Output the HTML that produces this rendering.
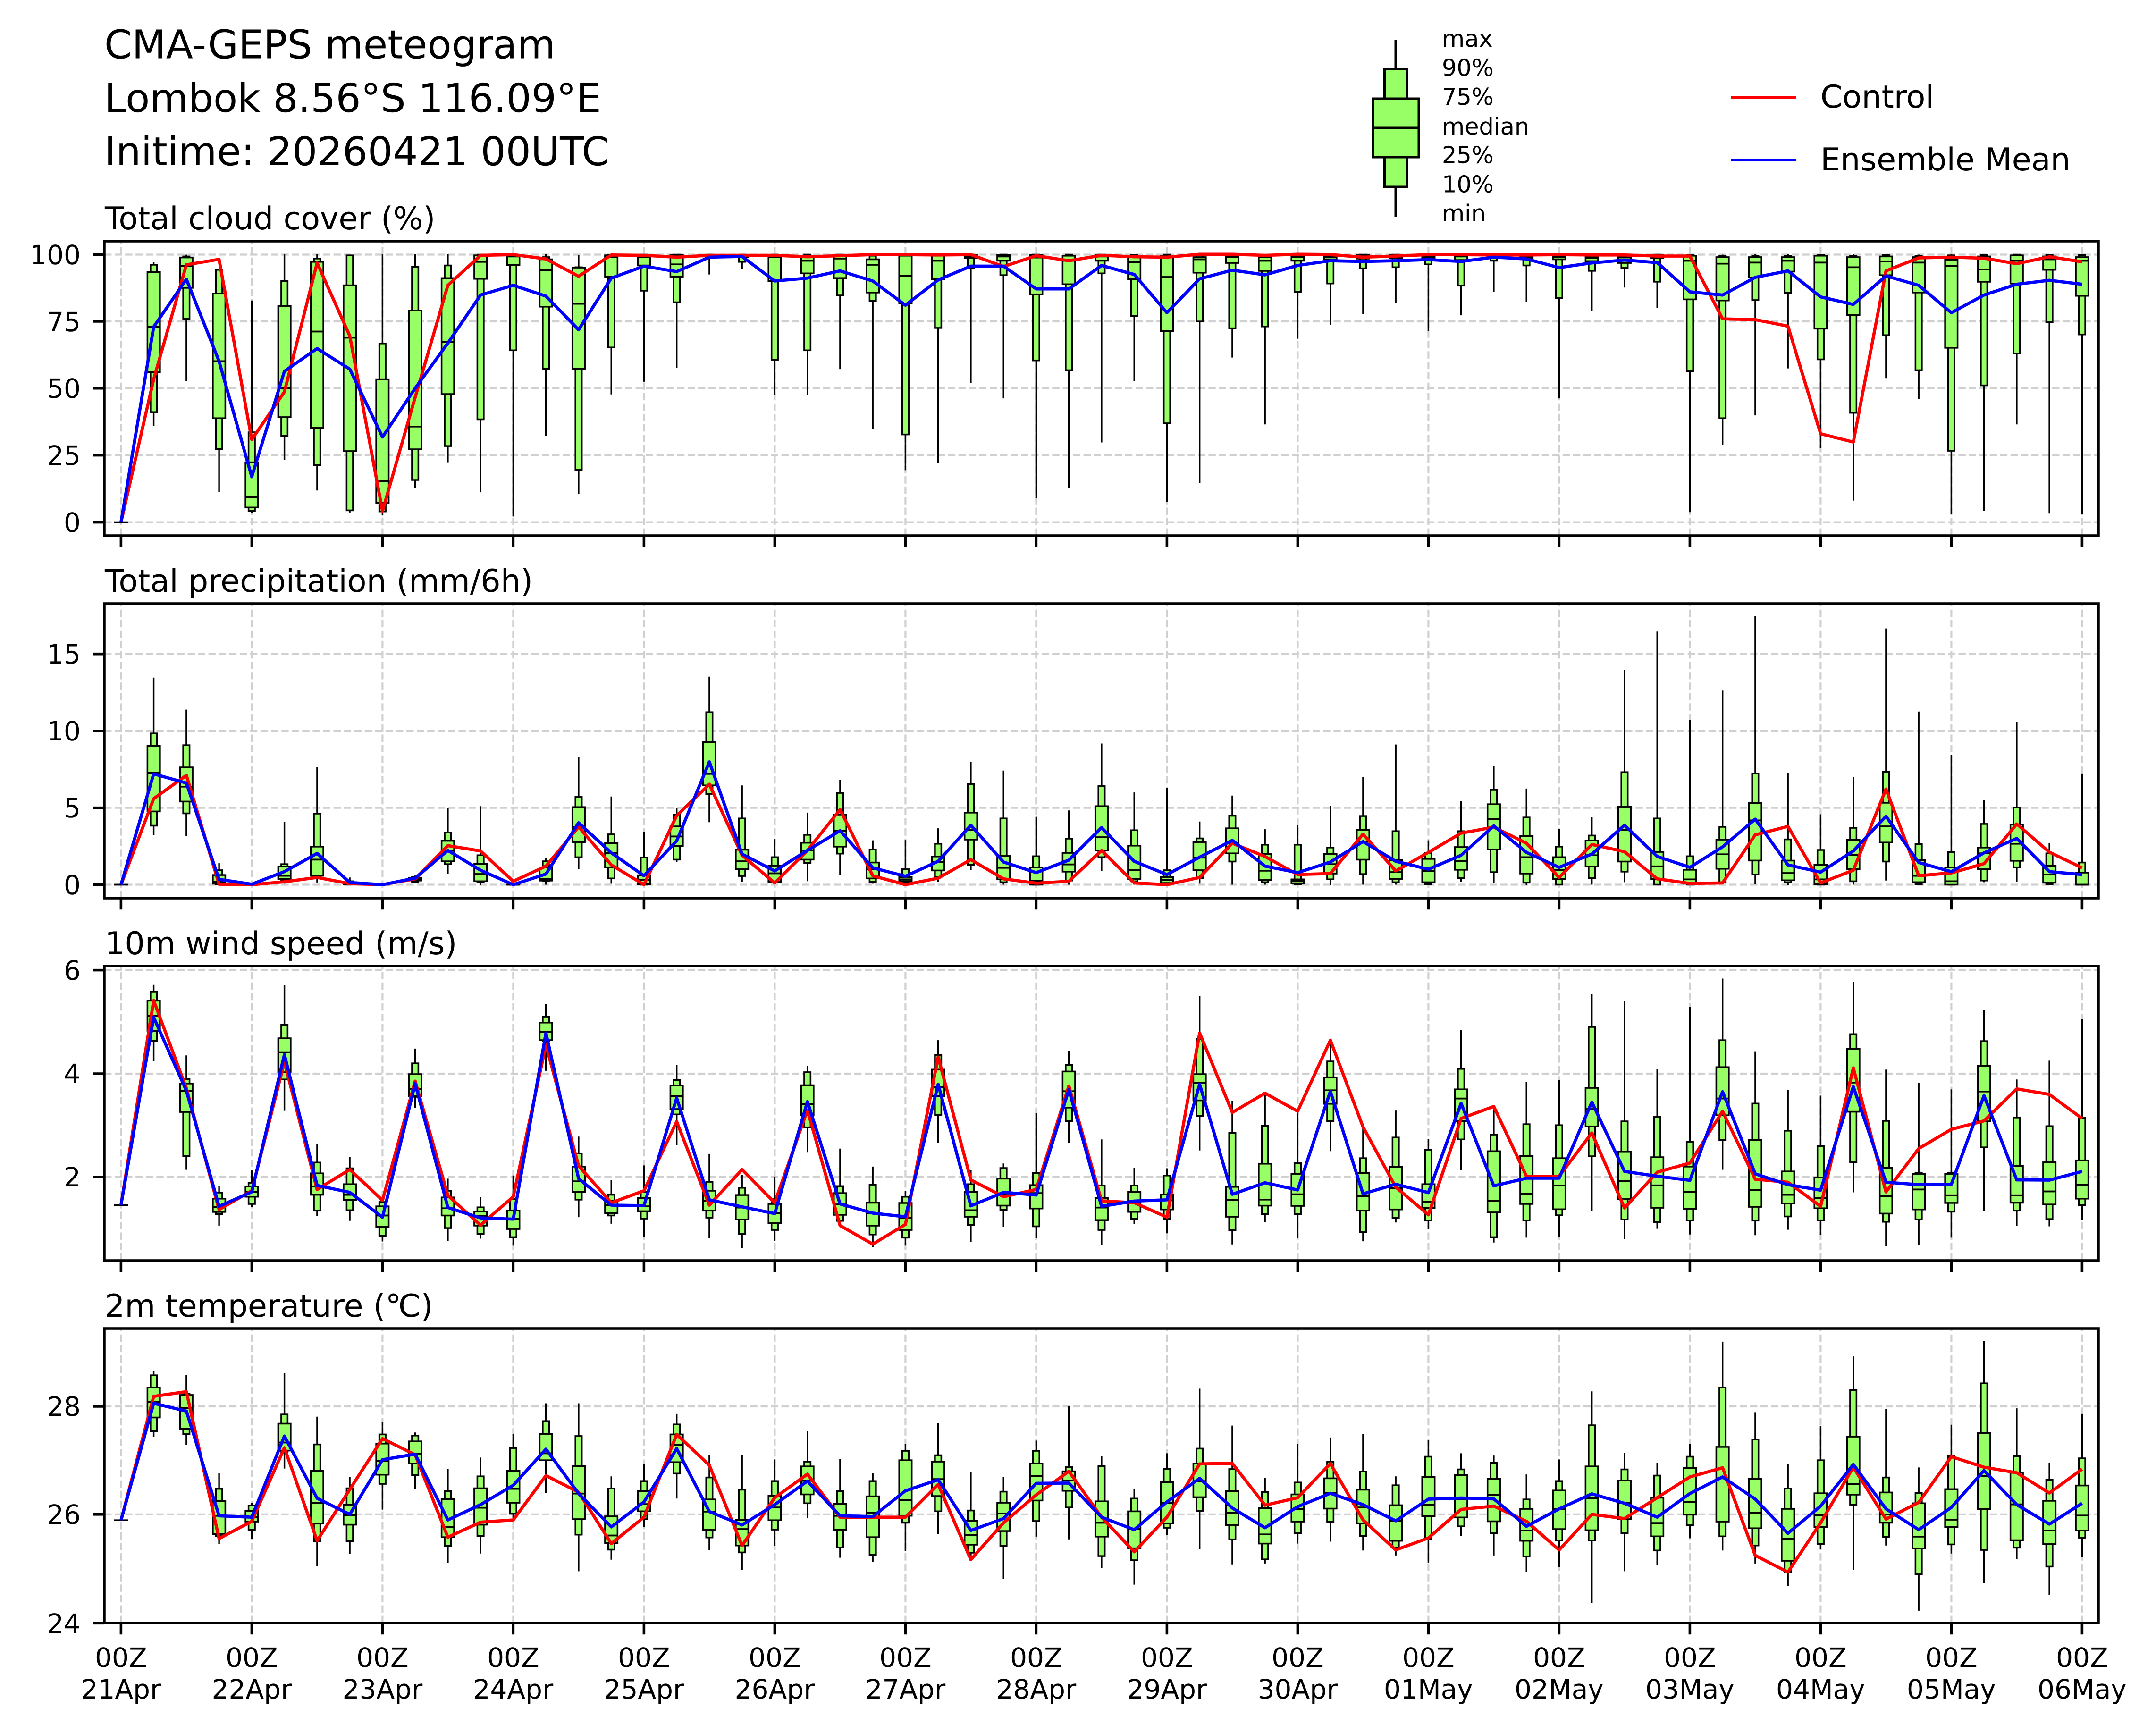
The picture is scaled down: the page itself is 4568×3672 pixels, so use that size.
<!DOCTYPE html>
<html lang="en">
<head>
<meta charset="utf-8">
<title>CMA-GEPS meteogram</title>
<style>
html,body{margin:0;padding:0;background:#fff}
svg{display:block}
text{font-family:"DejaVu Sans",sans-serif;fill:#000;text-rendering:geometricPrecision}
.m{font-size:83.7px}.t{font-size:66.67px}.k{font-size:56.5px}.l{font-size:49.4px}
.e{text-anchor:end}.c{text-anchor:middle}
</style>
</head>
<body>
<svg xmlns="http://www.w3.org/2000/svg" width="4568" height="3672" viewBox="0 0 4568 3672">
<rect width="4568" height="3672" fill="#fff"/>
<defs>
<clipPath id="c0"><rect x="221" y="511" width="4225" height="624"/></clipPath>
<clipPath id="c1"><rect x="221" y="1279" width="4225" height="624"/></clipPath>
<clipPath id="c2"><rect x="221" y="2047" width="4225" height="624"/></clipPath>
<clipPath id="c3"><rect x="221" y="2815" width="4225" height="624"/></clipPath>
</defs>
<g id="plots"></g>

<text class="m" x="221" y="123.5">CMA-GEPS meteogram</text>
<text class="m" x="221" y="237">Lombok 8.56°S 116.09°E</text>
<text class="m" x="221" y="350">Initime: 20260421 00UTC</text>

<text class="t" x="222" y="486">Total cloud cover (%)</text>
<text class="t" x="222" y="1254">Total precipitation (mm/6h)</text>
<text class="t" x="222" y="2022">10m wind speed (m/s)</text>
<text class="t" x="222" y="2790">2m temperature (℃)</text>

<g stroke="#000" stroke-width="5" fill="#99ff66">
<path d="M2957 84V146.5M2957 396V459" fill="none"/>
<rect x="2933.5" y="146.5" width="47.5" height="62.5"/>
<rect x="2933.5" y="333" width="47.5" height="63"/>
<rect x="2909" y="209" width="97" height="124"/>
<path d="M2909 271H3006" fill="none"/>
</g>
<text class="l" x="3055" y="99">max</text>
<text class="l" x="3055" y="160.5">90%</text>
<text class="l" x="3055" y="222">75%</text>
<text class="l" x="3055" y="285">median</text>
<text class="l" x="3055" y="345.5">25%</text>
<text class="l" x="3055" y="407.5">10%</text>
<text class="l" x="3055" y="469">min</text>

<path d="M3668 206H3806" stroke="#f00" stroke-width="6" fill="none"/>
<path d="M3668 339H3806" stroke="#00f" stroke-width="6" fill="none"/>
<text class="t" x="3857" y="228">Control</text>
<text class="t" x="3857" y="361">Ensemble Mean</text>

<text class="k e" x="171" y="560">100</text>
<text class="k e" x="171" y="702">75</text>
<text class="k e" x="171" y="843">50</text>
<text class="k e" x="171" y="985">25</text>
<text class="k e" x="171" y="1127">0</text>

<text class="k e" x="171" y="1406">15</text>
<text class="k e" x="171" y="1569">10</text>
<text class="k e" x="171" y="1732">5</text>
<text class="k e" x="171" y="1895">0</text>

<text class="k e" x="171" y="2076">6</text>
<text class="k e" x="171" y="2295">4</text>
<text class="k e" x="171" y="2514">2</text>

<text class="k e" x="171" y="3000">28</text>
<text class="k e" x="171" y="3229">26</text>
<text class="k e" x="171" y="3460">24</text>

<g class="k">
<text class="k c" x="256.4" y="3532">00Z</text><text class="k c" x="256.4" y="3599">21Apr</text>
<text class="k c" x="533.4" y="3532">00Z</text><text class="k c" x="533.4" y="3599">22Apr</text>
<text class="k c" x="810.4" y="3532">00Z</text><text class="k c" x="810.4" y="3599">23Apr</text>
<text class="k c" x="1087.4" y="3532">00Z</text><text class="k c" x="1087.4" y="3599">24Apr</text>
<text class="k c" x="1364.4" y="3532">00Z</text><text class="k c" x="1364.4" y="3599">25Apr</text>
<text class="k c" x="1641.4" y="3532">00Z</text><text class="k c" x="1641.4" y="3599">26Apr</text>
<text class="k c" x="1918.4" y="3532">00Z</text><text class="k c" x="1918.4" y="3599">27Apr</text>
<text class="k c" x="2195.4" y="3532">00Z</text><text class="k c" x="2195.4" y="3599">28Apr</text>
<text class="k c" x="2472.4" y="3532">00Z</text><text class="k c" x="2472.4" y="3599">29Apr</text>
<text class="k c" x="2749.4" y="3532">00Z</text><text class="k c" x="2749.4" y="3599">30Apr</text>
<text class="k c" x="3026.4" y="3532">00Z</text><text class="k c" x="3026.4" y="3599">01May</text>
<text class="k c" x="3303.4" y="3532">00Z</text><text class="k c" x="3303.4" y="3599">02May</text>
<text class="k c" x="3580.4" y="3532">00Z</text><text class="k c" x="3580.4" y="3599">03May</text>
<text class="k c" x="3857.4" y="3532">00Z</text><text class="k c" x="3857.4" y="3599">04May</text>
<text class="k c" x="4134.4" y="3532">00Z</text><text class="k c" x="4134.4" y="3599">05May</text>
<text class="k c" x="4411.4" y="3532">00Z</text><text class="k c" x="4411.4" y="3599">06May</text>
</g>
</svg>
<script>
(function(){
var P=[
{top:511,y0:0,k:1.3067,ticks:[539.5,681,822.7,964.6,1106.6],
B:"726 733 753 905 1030 1141 1180;705 710 713 736 797 883 1055;745 747 813 1000 1158 1243 1362;832 1197 1280 1377 1405 1415 1420;703 778 847 1075 1155 1207 1273;703 716 725 918 1185 1288 1358;705 707 790 935 1249 1413 1419;703 951 1050 1332 1392 1416 1427;703 739 860 1181 1244 1329 1352;703 735 770 947 1091 1235 1280;705 705 707 725 772 1161 1363;704 705 706 710 734 970 1430;704 712 718 748 849 1021 1207;706 740 741 841 1021 1301 1368;705 706 707 712 766 962 1092;704 705 706 712 735 805 1057;704 705 706 732 766 837 1018;704 705 706 708 710 714 760;704 705 706 708 712 725 746;704 705 706 712 778 996 1095;704 705 708 722 757 970 1093;704 705 708 716 770 818 1022;704 708 718 733 810 833 1187;704 705 708 764 840 1203 1302;704 705 708 722 773 908 1283;704 705 706 710 714 744 1060;704 705 706 710 722 762 1103;704 705 706 713 815 998 1379;704 705 708 722 787 1025 1350;704 705 706 710 722 757 1225;704 706 708 726 773 875 1055;704 705 708 767 917 1172 1390;704 705 712 718 755 890 1338;704 705 709 712 728 909 990;704 706 712 722 750 904 1175;704 705 709 712 722 808 938;704 705 708 711 718 785 900;704 705 706 712 716 743 869;704 705 706 710 715 740 840;704 705 708 712 716 732 916;704 705 706 710 720 791 873;704 705 706 709 714 722 808;704 705 708 712 717 735 835;704 705 709 712 718 825 1103;704 705 710 714 723 750 860;704 705 712 718 728 742 796;704 705 706 710 714 780 853;704 706 708 722 829 1028 1418;705 709 712 730 832 1158 1232;704 708 712 727 768 831 1150;704 708 712 722 752 811 1020;704 706 708 727 910 995 1240;704 708 712 740 872 1143 1386;704 706 710 724 762 928 1047;705 708 712 727 810 1025 1105;704 707 719 736 963 1248 1423;704 706 710 746 780 1067 1414;704 705 707 722 785 979 1175;704 706 710 718 747 892 1422;704 706 712 722 819 926 1423",
R:"1446 1050 733 718 1217 1085 728 930 1415 1100 790 707 705 717 765 706 707 712 707 707 707 711 708 705 705 706 705 738 708 722 707 711 712 704 704 707 704 705 712 709 705 705 706 706 705 706 706 709 709 883 885 903 1201 1224 750 714 712 715 730 711 725",
M:"1446 905 773 1000 1320 1028 965 1022 1210 1075 950 817 790 820 913 770 737 752 712 710 778 770 750 778 845 775 737 737 800 800 735 760 866 772 748 761 735 722 724 722 719 724 712 717 741 728 720 727 808 817 768 750 822 843 764 790 866 817 787 776 787",
zero:1446},
{top:1279,y0:1200,k:1.96,ticks:[1385.7,1549,1711.7,1874.5],
B:"462 694 746 858 1018 1077 1117;595 743 835 915 977 1026 1120;1233 1262 1282 1310 1318 1320 1322;1320 1321 1321 1322 1322 1322 1322;1062 1237 1247 1285 1298 1302 1318;835 1027 1164 1218 1285 1295 1313;1292 1308 1312 1317 1320 1322 1322;1320 1321 1321 1322 1322 1322 1322;1284 1290 1293 1300 1305 1310 1312;1004 1105 1140 1180 1225 1237 1276;996 1200 1236 1278 1308 1312 1324;1320 1321 1321 1322 1322 1322 1322;1210 1225 1250 1298 1305 1308 1322;790 958 1000 1082 1145 1208 1258;956 1113 1150 1190 1250 1296 1318;1103 1209 1283 1303 1320 1322 1323;1003 1032 1080 1122 1162 1218 1228;458 606 730 862 910 945 1063;910 1047 1177 1225 1258 1286 1310;1133 1208 1243 1275 1310 1312 1320;1023 1115 1148 1180 1218 1232 1308;886 941 1031 1098 1164 1193 1283;1138 1176 1230 1257 1296 1310 1318;1137 1258 1290 1300 1307 1310 1322;1088 1152 1205 1228 1263 1290 1310;812 904 1023 1095 1135 1240 1262;848 1047 1203 1252 1300 1312 1322;1040 1204 1250 1306 1322 1322 1324;1014 1131 1190 1238 1268 1305 1322;736 913 996 1125 1180 1208 1265;939 1096 1160 1262 1298 1308 1322;920 1262 1290 1303 1315 1322 1322;1060 1130 1145 1210 1262 1295 1318;952 1036 1088 1150 1192 1226 1322;1092 1156 1194 1264 1302 1312 1322;1074 1156 1300 1306 1316 1320 1322;995 1168 1194 1237 1276 1300 1325;875 1037 1094 1143 1218 1278 1322;740 1100 1220 1270 1298 1312 1322;1138 1190 1215 1265 1312 1320 1322;975 1100 1166 1224 1260 1295 1310;830 927 988 1050 1176 1270 1316;923 1043 1120 1208 1276 1314 1325;1090 1164 1208 1262 1298 1322 1324;1042 1118 1139 1200 1247 1295 1322;430 855 998 1095 1226 1268 1312;271 1047 1186 1246 1298 1322 1324;637 1204 1260 1300 1318 1322 1324;516 1082 1135 1196 1256 1312 1318;207 860 983 1055 1222 1280 1320;857 1134 1222 1274 1304 1312 1324;1030 1178 1240 1300 1320 1322 1324;875 1086 1136 1198 1258 1308 1322;258 853 982 1080 1147 1226 1305;603 1153 1220 1285 1312 1320 1324;783 1187 1250 1308 1322 1322 1324;972 1070 1168 1192 1258 1305 1312;646 1002 1072 1152 1223 1250 1310;1150 1192 1244 1280 1314 1320 1324;860 1230 1272 1322 1322 1322 1324",
R:"1322 965 868 1320 1322 1310 1292 1318 1322 1298 1160 1182 1308 1245 1082 1240 1322 1035 905 1200 1315 1180 1010 1285 1322 1295 1218 1298 1316 1308 1180 1315 1322 1292 1150 1205 1280 1276 1112 1265 1188 1108 1083 1150 1292 1155 1185 1298 1317 1315 1115 1080 1315 1262 925 1285 1273 1235 1070 1187 1252",
M:"1322 862 900 1300 1320 1268 1192 1313 1322 1295 1180 1262 1322 1278 1065 1190 1285 1140 812 1195 1265 1180 1098 1252 1287 1225 1075 1228 1272 1220 1085 1225 1280 1208 1138 1245 1272 1228 1143 1225 1258 1200 1078 1188 1250 1195 1075 1205 1250 1165 1050 1240 1270 1182 1038 1230 1268 1190 1130 1268 1280",
zero:1322},
{top:2047,y0:2000,k:1.96,ticks:[2055.6,2275,2493.9],
B:"170 198 236 299 362 403 487;463 561 580 610 698 881 938;1005 1033 1058 1092 1113 1122 1170;941 992 1007 1030 1050 1080 1093;172 336 392 450 533 563 693;829 908 953 1007 1042 1108 1130;884 932 998 1042 1063 1106 1150;1060 1072 1090 1128 1175 1212 1236;435 496 541 602 632 635 682;975 1025 1053 1098 1128 1180 1234;1052 1094 1111 1130 1170 1204 1224;962 1060 1108 1142 1184 1218 1253;250 302 327 365 400 403 527;800 870 925 986 1030 1062 1135;982 1042 1066 1085 1118 1128 1162;920 1030 1055 1090 1110 1141 1218;503 565 588 632 686 708 836;872 988 1025 1068 1108 1137 1222;960 1013 1043 1095 1145 1205 1263;966 1060 1080 1118 1160 1188 1234;507 533 587 665 712 762 865;850 1006 1035 1082 1125 1150 1160;925 1000 1075 1118 1170 1207 1260;1026 1050 1076 1138 1188 1220 1253;400 461 522 594 632 710 827;940 998 1030 1106 1133 1167 1237;912 931 975 1042 1087 1104 1175;702 952 1002 1035 1099 1173 1222;444 503 530 612 680 736 827;812 1004 1055 1095 1147 1188 1252;930 1004 1030 1075 1113 1142 1163;932 962 1041 1065 1103 1142 1202;217 395 541 577 650 714 858;652 785 1009 1064 1133 1189 1248;620 756 913 1062 1087 1122 1156;700 911 955 1040 1088 1122 1222;405 488 554 608 664 736 861;760 890 952 1047 1108 1197 1235;692 804 926 1015 1103 1138 1157;810 855 998 1072 1097 1149 1184;358 519 604 642 736 812 940;675 792 861 1067 1115 1218 1240;574 749 881 1038 1080 1149 1220;566 753 890 1004 1102 1127 1217;208 345 598 686 758 882 1108;236 737 862 985 1060 1145 1225;520 719 886 1003 1096 1155 1183;262 822 925 1030 1100 1149 1207;144 400 512 642 712 814 938;446 663 814 1023 1092 1149 1210;606 776 945 1042 1078 1132 1187;630 840 970 1056 1098 1148 1208;158 375 436 576 697 906 1032;522 735 930 1048 1120 1154 1255;578 950 955 1020 1103 1144 1249;604 950 955 1044 1076 1112 1220;275 404 507 613 737 845 1110;563 721 922 1044 1075 1108 1172;485 757 907 1028 1082 1143 1173;312 722 899 1000 1058 1085 1148",
R:"1084 235 600 1103 1025 490 1020 937 1065 570 1045 1168 1050 420 922 1075 1025 738 1085 937 1075 690 1170 1247 1165 470 980 1050 1020 590 1067 1075 1135 370 700 620 695 400 760 1010 1125 725 675 965 965 785 1097 948 910 695 977 990 1090 515 1030 850 770 735 602 625 725",
M:"1084 305 610 1090 1030 460 1003 1032 1135 580 1095 1138 1143 370 975 1085 1087 640 1063 1092 1120 655 1080 1118 1133 583 1088 1032 1043 605 1090 1068 1063 583 1040 992 1022 612 1038 998 1033 662 1005 973 973 657 945 965 982 614 955 1000 1023 593 990 1000 998 630 980 981 945",
zero:1084},
{top:2815,y0:2750,k:1.7,ticks:[2980,3208.8,3439.4],
B:"262 279 323 375 431 480 500;278 345 350 397 472 491 530;632 688 732 785 851 858 887;738 748 767 790 806 835 868;272 420 453 521 550 555 615;428 528 623 738 813 877 967;645 686 745 783 817 876 922;447 492 525 587 637 670 763;485 496 517 561 597 638 689;617 696 725 825 862 893 955;575 643 686 756 817 858 921;490 541 623 688 738 778 803;380 444 490 560 585 585 703;380 498 606 705 797 853 985;643 687 787 856 883 907 943;600 660 696 743 769 797 825;418 456 492 529 592 633 723;565 647 726 770 836 863 909;565 691 800 833 892 917 980;582 660 713 755 801 835 893;480 590 607 659 708 740 793;580 696 742 785 835 899 936;632 660 715 775 862 926 951;527 551 585 728 785 810 912;451 567 590 653 714 769 850;626 766 803 855 889 918 945;645 698 738 777 840 893 1012;514 551 597 642 730 804 860;390 610 625 658 695 755 870;570 606 733 810 860 930 973;687 723 769 833 902 945 1033;560 616 664 739 812 828 855;327 543 597 660 718 767 905;460 617 696 775 818 870 960;648 699 757 852 885 942 957;527 665 708 761 806 848 885;503 590 650 703 759 807 878;491 626 691 755 812 858 910;643 675 747 803 875 900 928;512 572 645 746 786 868 955;560 618 638 725 791 823 858;568 594 652 710 805 848 928;636 726 760 838 875 932 987;582 660 694 760 833 874 970;337 459 607 722 837 874 1099;558 618 658 738 797 847 985;594 640 720 811 859 910 963;527 572 613 736 781 819 866;158 323 537 650 806 859 910;412 510 652 775 830 892 957;600 687 760 868 947 989 1038;461 585 704 783 825 886 905;211 332 500 671 709 745 980;400 647 701 780 810 861 892;611 703 740 860 903 995 1127;457 570 689 799 825 888 921;155 308 487 642 761 908 1028;398 570 630 744 873 900 941;595 655 731 838 887 968 1070;418 578 676 784 838 864 935",
R:"801 355 338 867 805 540 875 690 507 565 862 808 800 640 700 885 790 492 603 892 720 635 790 790 790 672 943 810 710 625 790 915 790 598 596 747 720 597 800 908 865 762 750 805 908 780 795 720 645 612 928 988 810 610 797 737 572 610 630 703 617",
M:"801 380 408 785 790 498 722 780 583 563 800 745 675 545 705 825 735 543 770 818 745 660 785 788 695 655 838 795 668 667 790 835 735 650 757 828 752 704 745 803 725 721 724 823 760 706 740 790 705 645 725 848 750 600 760 835 755 622 745 815 740",
zero:801}
];
var X0=256.4,DX=69.25,s="",i,j;
function X(n){return X0+DX*n}
function f(n){return n.toFixed(1)}
P.forEach(function(p,pi){
 var bot=p.top+624;
 function Y(z){return p.y0+z/p.k}
 var g='';
 /* grid */
 g+='<g stroke="#d0d0d0" stroke-width="4.17" stroke-dasharray="15.4 6.67" fill="none">';
 for(j=0;j<=15;j++){g+='<path d="M'+f(X(j*4))+' '+bot+'V'+p.top+'"/>'}
 p.ticks.forEach(function(t){g+='<path d="M221 '+t+'H4446"/>'});
 g+='</g>';
 /* clip group */
 g+='<g clip-path="url(#c'+pi+')">';
 var W='',I='',O='',Md='';
 var rows=p.B.split(';').map(function(r){return r.split(' ').map(Number)});
 var z0=Y(p.zero);
 Md+='M'+f(X(0)-15)+' '+f(z0)+'H'+f(X(0)+15);
 rows.forEach(function(r,k){
  var x=X(k+1),v=r.map(Y);
  W+='M'+f(x)+' '+f(v[0])+'V'+f(v[6]);
  I+='<rect x="'+f(x-6.75)+'" y="'+f(v[1])+'" width="13.5" height="'+f(v[5]-v[1])+'"/>';
  O+='<rect x="'+f(x-13.25)+'" y="'+f(v[2])+'" width="26.5" height="'+f(v[4]-v[2])+'"/>';
  Md+='M'+f(x-13.25)+' '+f(v[3])+'H'+f(x+13.25);
 });
 g+='<path d="'+W+'" stroke="#000" stroke-width="3.4" fill="none"/>';
 g+='<g fill="#99ff66" stroke="#000" stroke-width="3.5">'+I+O+'</g>';
 g+='<path d="'+Md+'" stroke="#000" stroke-width="3.7" fill="none"/>';
 function line(str,col){
  var a=str.split(' ').map(Number),d='';
  a.forEach(function(z,k){d+=(k?'L':'M')+f(X(k))+' '+f(Y(z))});
  return '<path d="'+d+'" stroke="'+col+'" stroke-width="6.67" fill="none" stroke-linejoin="round"/>';
 }
 g+=line(p.R,'#f00')+line(p.M,'#00f');
 g+='</g>';
 /* ticks */
 var T='';
 p.ticks.forEach(function(t){T+='M196.7 '+t+'H221'});
 for(j=0;j<=15;j++){T+='M'+f(X(j*4))+' '+bot+'V'+(bot+24.3)}
 g+='<path d="'+T+'" stroke="#000" stroke-width="5.56" fill="none"/>';
 /* spines */
 g+='<rect x="221" y="'+p.top+'" width="4225" height="624" fill="none" stroke="#000" stroke-width="5.56"/>';
 s+=g;
});
document.getElementById('plots').innerHTML=s;
})();
</script>
</body>
</html>
